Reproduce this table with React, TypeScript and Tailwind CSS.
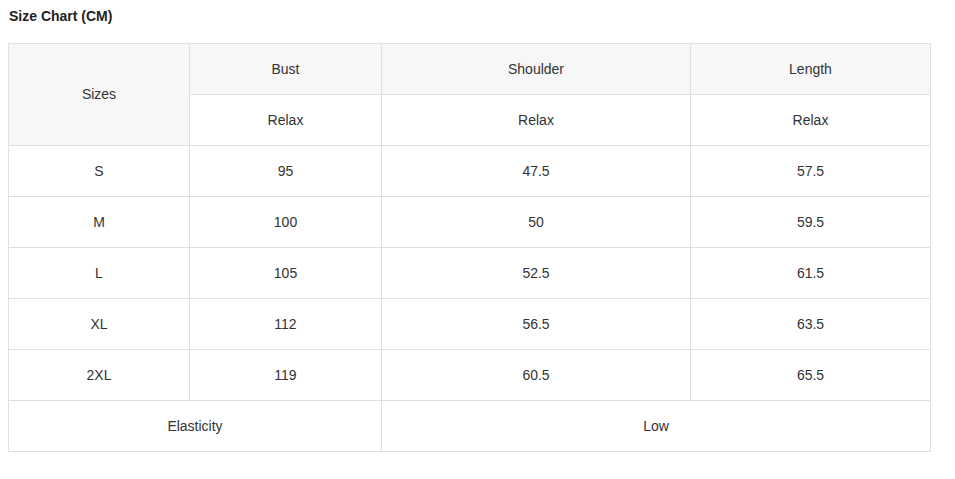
import React from 'react';

const rows = [
	['S', '95', '47.5', '57.5'],
	['M', '100', '50', '59.5'],
	['L', '105', '52.5', '61.5'],
	['XL', '112', '56.5', '63.5'],
	['2XL', '119', '60.5', '65.5'],
];

const cell = 'border border-[#e0e0e0] h-[51px] text-center align-middle p-0';

export default function App() {
	return (
		<div className="bg-white min-h-[479px] w-[955px] text-[#333] text-[14px] font-['Liberation_Sans',Arial,sans-serif]">
			<div className="pt-[6px] pl-[9px] h-[43px] text-[14px] font-bold text-[#222]">Size Chart (CM)</div>
			<table className="ml-[8px] border-collapse table-fixed w-[922px]">
				<colgroup>
					<col className="w-[181px]" />
					<col className="w-[192px]" />
					<col className="w-[309px]" />
					<col className="w-[240px]" />
				</colgroup>
				<tbody>
					<tr>
						<td rowSpan={2} className={`${cell} bg-[#f7f7f7]`}>Sizes</td>
						<td className={`${cell} bg-[#f7f7f7]`}>Bust</td>
						<td className={`${cell} bg-[#f7f7f7]`}>Shoulder</td>
						<td className={`${cell} bg-[#f7f7f7]`}>Length</td>
					</tr>
					<tr>
						<td className={cell}>Relax</td>
						<td className={cell}>Relax</td>
						<td className={cell}>Relax</td>
					</tr>
					{rows.map((r) => (
						<tr key={r[0]}>
							{r.map((v, i) => (
								<td key={i} className={cell}>
									{v}
								</td>
							))}
						</tr>
					))}
					<tr>
						<td colSpan={2} className={cell}>Elasticity</td>
						<td colSpan={2} className={cell}>Low</td>
					</tr>
				</tbody>
			</table>
		</div>
	);
}
